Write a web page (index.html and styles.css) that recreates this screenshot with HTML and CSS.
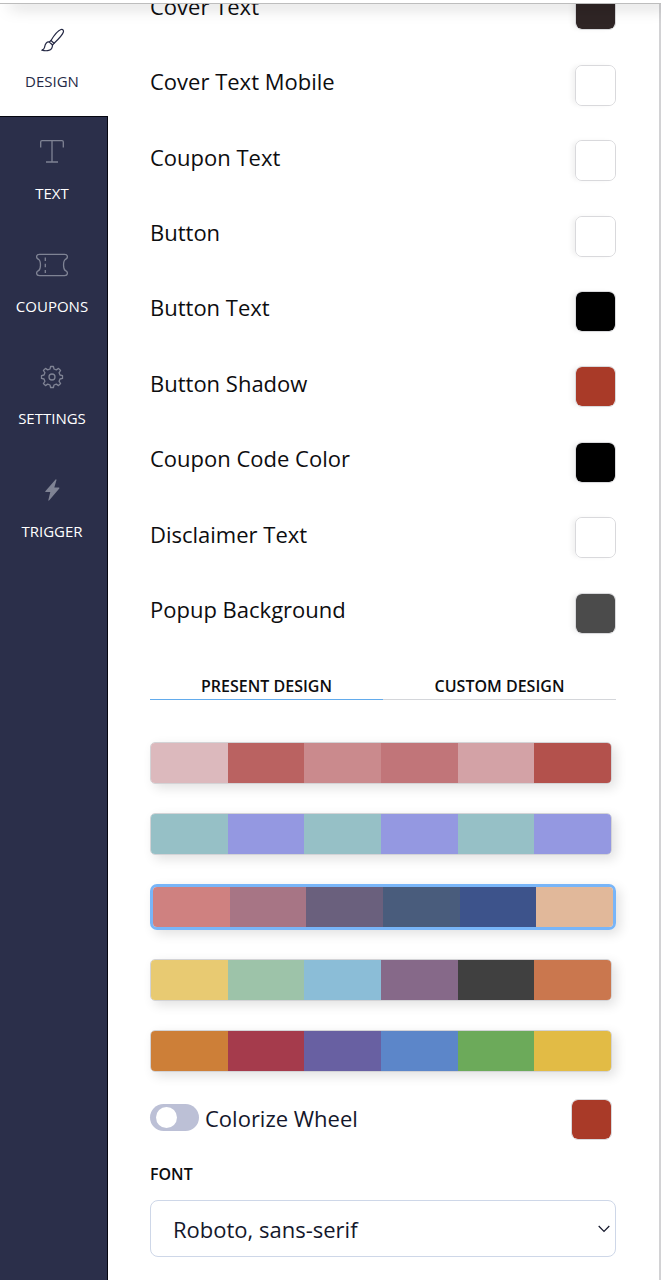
FILE: index.html
```html
<!DOCTYPE html>
<html lang="en">
<head>
<meta charset="utf-8">
<meta name="viewport" content="width=device-width, initial-scale=1">
<title>Design</title>
<link rel="stylesheet" href="styles.css">
</head>
<body>
<header class="topbar"></header>
<div class="layout">
  <nav class="sidebar">
    <div class="nav-list">
      <button class="nav-item active" type="button">
        <svg class="nav-icon" viewBox="0 0 32 32" fill="none" stroke="currentColor" stroke-width="1.2" stroke-linejoin="round" stroke-linecap="round"><path d="M15 16.5C18 11.500 22 6.500 25 5.500C27 5 28 6.500 27.300 8.300C26 12 21.500 16 18 19.300"/><path d="M15 16.500L18 19.300L16.500 21L13.300 18Z"/><path d="M13.300 18C9.500 17.500 9 21 8.500 23.500C8.200 25 7.200 25.700 5.800 26.200C10 27.200 16.500 27.500 16.500 21"/></svg>
        <span>DESIGN</span>
      </button>
      <button class="nav-item" type="button">
        <svg class="nav-icon" viewBox="0 0 32 32" fill="none" stroke="currentColor" stroke-width="1.300"><path d="M4.700 11.500V6Q4.700 4.700 6 4.700H26Q27.300 4.700 27.300 6V11.500M16 4.700V26M10 26H22"/></svg>
        <span>TEXT</span>
      </button>
      <button class="nav-item" type="button">
        <svg class="nav-icon" viewBox="0 0 32 32" fill="none" stroke="currentColor" stroke-width="1.300"><path d="M3.500 5.300H28.500C32 5.300 32.300 9 29.500 10.300C27 12 26.800 20 29.500 21.700C32.300 23 32 26.700 28.500 26.700H3.500C0 26.700 -.3 23 2.500 21.700C5.200 20 5 12 2.500 10.300C-.3 9 0 5.300 3.500 5.300Z"/><path d="M9.300 8.500V24" stroke-dasharray="3.500 2.700"/></svg>
        <span>COUPONS</span>
      </button>
      <button class="nav-item" type="button">
        <svg class="nav-icon" viewBox="0 0 32 32" fill="none" stroke="currentColor" stroke-width="1.300" stroke-linejoin="round"><circle cx="16" cy="16" r="3"/><path d="M14 8L14.600 5.500H17.400L18 8L20.300 8.900L22.500 7.400L24.600 9.500L23.100 11.700L24 14L26.500 14.600V17.400L24 18L23.100 20.300L24.600 22.500L22.500 24.600L20.300 23.100L18 24L17.400 26.500H14.600L14 24L11.700 23.100L9.500 24.600L7.400 22.500L8.900 20.300L8 18L5.500 17.400V14.600L8 14L8.900 11.700L7.400 9.500L9.500 7.400L11.700 8.900Z"/></svg>
        <span>SETTINGS</span>
      </button>
      <button class="nav-item" type="button">
        <svg class="nav-icon" viewBox="0 0 32 32" fill="currentColor"><path d="M19.800 5.300L9.300 17.300Q8.800 18 9.800 18H14.300L12.300 26.300Q12.500 27 13.300 26.300L23.300 14.500Q23.800 13.500 22.800 13.500H18.300L20.500 6Q20.400 4.900 19.800 5.300Z"/></svg>
        <span>TRIGGER</span>
      </button>
    </div>
  </nav>
  <main class="panel">
    <div class="color-list">
      <div class="row"><label for="c1">Cover Text</label><input class="swatch" id="c1" type="color" value="#2f2525"></div>
      <div class="row"><label for="c2">Cover Text Mobile</label><input class="swatch" id="c2" type="color" value="#ffffff"></div>
      <div class="row"><label for="c3">Coupon Text</label><input class="swatch" id="c3" type="color" value="#ffffff"></div>
      <div class="row"><label for="c4">Button</label><input class="swatch" id="c4" type="color" value="#ffffff"></div>
      <div class="row"><label for="c5">Button Text</label><input class="swatch" id="c5" type="color" value="#000000"></div>
      <div class="row"><label for="c6">Button Shadow</label><input class="swatch" id="c6" type="color" value="#a93a28"></div>
      <div class="row"><label for="c7">Coupon Code Color</label><input class="swatch" id="c7" type="color" value="#000000"></div>
      <div class="row"><label for="c8">Disclaimer Text</label><input class="swatch" id="c8" type="color" value="#ffffff"></div>
      <div class="row"><label for="c9">Popup Background</label><input class="swatch" id="c9" type="color" value="#4b4b4b"></div>
    </div>
    <div class="tabs" role="tablist">
      <button class="tab selected" type="button" role="tab" aria-selected="true">PRESENT DESIGN</button>
      <button class="tab" type="button" role="tab" aria-selected="false">CUSTOM DESIGN</button>
    </div>
    <div class="palettes">
      <label class="palette"><input type="radio" name="palette" aria-label="Rose"><i class="rose-1"></i><i class="rose-2"></i><i class="rose-3"></i><i class="rose-4"></i><i class="rose-5"></i><i class="rose-6"></i></label>
      <label class="palette"><input type="radio" name="palette" aria-label="Teal and violet"><i class="teal"></i><i class="violet"></i><i class="teal"></i><i class="violet"></i><i class="teal"></i><i class="violet"></i></label>
      <label class="palette"><input type="radio" name="palette" aria-label="Dusk" checked><i class="dusk-1"></i><i class="dusk-2"></i><i class="dusk-3"></i><i class="dusk-4"></i><i class="dusk-5"></i><i class="dusk-6"></i></label>
      <label class="palette"><input type="radio" name="palette" aria-label="Meadow"><i class="meadow-1"></i><i class="meadow-2"></i><i class="meadow-3"></i><i class="meadow-4"></i><i class="meadow-5"></i><i class="meadow-6"></i></label>
      <label class="palette"><input type="radio" name="palette" aria-label="Bright"><i class="bright-1"></i><i class="bright-2"></i><i class="bright-3"></i><i class="bright-4"></i><i class="bright-5"></i><i class="bright-6"></i></label>
    </div>
    <div class="wheel">
      <label class="switch-label"><input class="switch" type="checkbox" role="switch">Colorize Wheel</label>
      <input class="swatch flat" type="color" value="#a93a28" aria-label="Wheel color">
    </div>
    <label class="font-label" for="font">FONT</label>
    <div class="select-box">
      <select id="font"><option>Roboto, sans-serif</option></select>
      <svg class="chevron" viewBox="0 0 12 8" fill="none" stroke="currentColor" stroke-width="1.200"><path d="M.7 1L6 6.500L11.300 1"/></svg>
    </div>
  </main>
</div>
</body>
</html>
```
FILE: styles.css
```css
* { box-sizing: border-box; }

body {
  display: flex;
  flex-direction: column;
  min-height: 100vh;
  margin: 0;
  background: #fff;
  color: #0d0d0f;
  font-family: "Open Sans", "Noto Sans", sans-serif;
  font-size: 22px;
  line-height: 30px;
}

button, select { font: inherit; color: inherit; }

.topbar {
  position: relative;
  z-index: 2;
  height: 4px;
  background: #fff;
  border-bottom: 1px solid #bdbdbd;
  box-shadow: 10px 2px 16px rgba(0, 0, 0, .36);
}

.layout { display: flex; flex: 1; }

.sidebar {
  flex: 0 0 108px;
  border-right: 1px solid #050610;
  background: #2b2f4a;
}

.nav-list {
  display: flex;
  flex-direction: column;
  min-height: 562px;
}

.nav-item {
  display: flex;
  flex: 1;
  flex-direction: column;
  align-items: center;
  gap: 15px;
  padding: 20px 3px 0 0;
  border: 0;
  background: none;
  color: #fff;
  font-size: 15px;
  font-weight: 500;
  line-height: 20px;
}

.nav-item.active {
  margin-right: -1px;
  padding-right: 4px;
  background: #fff;
  color: #252945;
  font-weight: 400;
}

.nav-item:nth-child(2) { box-shadow: inset 0 1px #050610; }

.nav-icon { width: 32px; height: 32px; color: #7f8394; }
.active .nav-icon { color: #252945; }

.panel {
  flex: 1;
  min-width: 0;
  overflow: hidden;
  padding: 0 43px 23px 42px;
  border-right: 2px solid #d2d2d4;
}

.color-list {
  display: flex;
  flex-direction: column;
  min-height: 679px;
  margin-top: -36px;
}

.row {
  display: flex;
  flex: 1;
  align-items: center;
  justify-content: space-between;
}

.swatch {
  width: 41px;
  height: 41px;
  padding: 0;
  overflow: hidden;
  appearance: none;
  border: 1px solid #d9d9dc;
  border-radius: 7px;
  background: none;
  box-shadow: -4px 0 5px -1px rgba(0, 0, 0, .06);
}

.swatch::-webkit-color-swatch-wrapper { padding: 0; }
.swatch::-webkit-color-swatch { border: 0; border-radius: 5px; }

.row .swatch { margin: 8px 0 0; }

.tabs { display: flex; margin-top: 26px; }

.tab {
  flex: 1;
  padding: 0;
  border: 0;
  border-bottom: 1px solid #d4d6da;
  background: none;
  font-size: 16px;
  font-weight: 600;
  line-height: 26px;
}

.tab.selected { border-color: #62abec; }

.palettes {
  display: flex;
  flex-direction: column;
  gap: 29px;
  margin-top: 42px;
}

.palette {
  display: flex;
  margin-right: 4px;
  overflow: hidden;
  border: 1px solid #d3d3d6;
  border-radius: 5px;
  box-shadow: 4px 4px 12px rgba(0, 0, 0, .12);
}

.palette:has(:checked) {
  margin-right: 0;
  border: 3px solid #78b5f8;
  border-radius: 7px;
}

.palette input {
  position: absolute;
  width: 1px;
  height: 1px;
  margin: 0;
  opacity: 0;
}

.palette i { flex: 1; height: 40px; }

.rose-1 { background: #dcb9bd; }
.rose-2 { background: #ba6261; }
.rose-3 { background: #ca8a8d; }
.rose-4 { background: #c17579; }
.rose-5 { background: #d3a2a6; }
.rose-6 { background: #b3514c; }
.teal { background: #96c0c6; }
.violet { background: #9498e1; }
.dusk-1 { background: #cf8180; }
.dusk-2 { background: #a77585; }
.dusk-3 { background: #6a607d; }
.dusk-4 { background: #495c7c; }
.dusk-5 { background: #3d538b; }
.dusk-6 { background: #e1b89a; }
.meadow-1 { background: #e8ca72; }
.meadow-2 { background: #9dc3a9; }
.meadow-3 { background: #8bbdd7; }
.meadow-4 { background: #866989; }
.meadow-5 { background: #404040; }
.meadow-6 { background: #ca774e; }
.bright-1 { background: #cd7f38; }
.bright-2 { background: #a53b4c; }
.bright-3 { background: #6860a2; }
.bright-4 { background: #5c86c9; }
.bright-5 { background: #6caa5a; }
.bright-6 { background: #e2bb45; }

.wheel {
  display: flex;
  align-items: center;
  justify-content: space-between;
  margin-top: 27px;
  padding-right: 4px;
  color: #14172b;
}

.flat { box-shadow: none; }

.switch-label { display: flex; align-items: center; gap: 6px; margin-bottom: 4px; }

.switch {
  display: flex;
  align-items: center;
  width: 49px;
  height: 27px;
  margin: 0;
  padding: 0 6px;
  appearance: none;
  border-radius: 14px;
  background: #bcc0d6;
}

.switch::before {
  width: 21px;
  height: 21px;
  border-radius: 50%;
  background: #fff;
  content: "";
}

.switch:checked { justify-content: flex-end; background: #62abec; }

.font-label {
  display: block;
  margin: 22px 0 14px;
  font-size: 16px;
  font-weight: 600;
  line-height: 24px;
}

.select-box { display: grid; align-items: center; color: #14172b; }

.select-box select {
  grid-area: 1 / 1;
  width: 100%;
  height: 57px;
  padding: 0 22px;
  appearance: none;
  border: 1px solid #ced7e8;
  border-radius: 8px;
  background: #fff;
}

.chevron {
  grid-area: 1 / 1;
  justify-self: end;
  width: 12px;
  height: 8px;
  margin-right: 6px;
  pointer-events: none;
}
```
